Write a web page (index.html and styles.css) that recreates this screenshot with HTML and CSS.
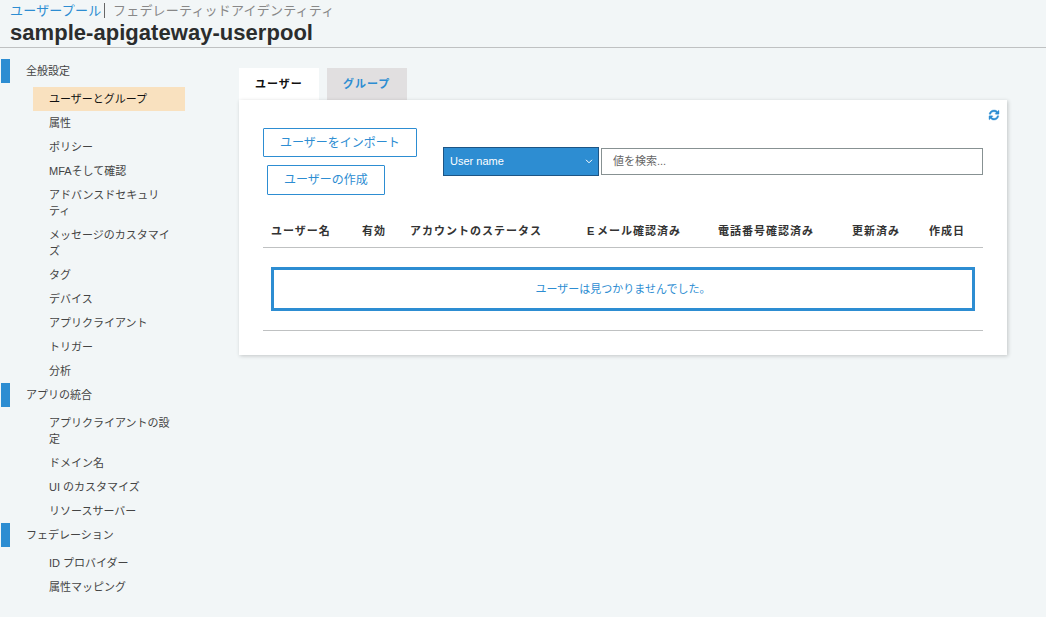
FILE: index.html
```html
<!DOCTYPE html>
<html lang="ja">
<head>
<meta charset="utf-8">
<title>sample-apigateway-userpool</title>
<link rel="stylesheet" href="styles.css">
</head>
<body>
<header class="header">
  <nav class="crumbs"><a class="crumb crumb-current">ユーザープール</a><a class="crumb">フェデレーティッドアイデンティティ</a></nav>
  <h1 class="title">sample-apigateway-userpool</h1>
</header>
<div class="layout">
  <aside class="sidebar">
    <h2 class="group">全般設定</h2>
    <ul class="menu">
      <li class="item item-active">ユーザーとグループ</li>
      <li class="item">属性</li>
      <li class="item">ポリシー</li>
      <li class="item">MFAそして確認</li>
      <li class="item">アドバンスドセキュリティ</li>
      <li class="item">メッセージのカスタマイズ</li>
      <li class="item">タグ</li>
      <li class="item">デバイス</li>
      <li class="item">アプリクライアント</li>
      <li class="item">トリガー</li>
      <li class="item">分析</li>
    </ul>
    <h2 class="group">アプリの統合</h2>
    <ul class="menu">
      <li class="item">アプリクライアントの設定</li>
      <li class="item">ドメイン名</li>
      <li class="item">UI のカスタマイズ</li>
      <li class="item">リソースサーバー</li>
    </ul>
    <h2 class="group">フェデレーション</h2>
    <ul class="menu">
      <li class="item">ID プロバイダー</li>
      <li class="item">属性マッピング</li>
    </ul>
  </aside>
  <main class="main">
    <div class="tabs">
      <div class="tab tab-active">ユーザー</div>
      <div class="tab">グループ</div>
    </div>
    <section class="panel">
      <svg class="refresh" viewBox="0 0 1536 1536"><path fill="currentColor" stroke="currentColor" stroke-width="60" d="M1511 928q0 5-1 7-64 268-268 434.500T764 1536q-146 0-282.500-55T238 1324l-129 129q-19 19-45 19t-45-19-19-45V960q0-26 19-45t45-19h448q26 0 45 19t19 45-19 45l-137 137q71 66 161 102t187 36q134 0 250-65t186-179q11-17 53-117 8-23 30-23h192q13 0 22.500 9.500t9.500 22.500zm25-800v448q0 26-19 45t-45 19h-448q-26 0-45-19t-19-45 19-45l138-138Q969 256 768 256q-134 0-250 65T332 500q-11 17-53 117-8 23-30 23H50q-13 0-22.500-9.500T18 608v-7q65-268 270-434.500T768 0q146 0 284 55.500T1297 212l130-129q19-19 45-19t45 19 19 45z"/></svg>
      <div class="toolbar">
        <div class="actions">
          <button class="btn">ユーザーをインポート</button>
          <button class="btn btn-create">ユーザーの作成</button>
        </div>
        <div class="search">
          <div class="select"><span>User name</span><svg class="chevron" viewBox="0 0 8 5"><path d="M1 .8 4 3.8 7 .8" fill="none" stroke="currentColor"/></svg></div>
          <input class="search-input" type="text" placeholder="値を検索...">
        </div>
      </div>
      <div class="table-head">
        <span>ユーザー名</span><span>有効</span><span>アカウントのステータス</span><span><span class="latin">E </span>メール確認済み</span><span>電話番号確認済み</span><span>更新済み</span><span>作成日</span>
      </div>
      <div class="table-body">
        <div class="empty">ユーザーは見つかりませんでした。</div>
      </div>
    </section>
  </main>
</div>
</body>
</html>
```
FILE: styles.css
```css
* { box-sizing: border-box; }
body {
  margin: 0;
  background: #f2f6f7;
  color: #444;
  font: 11px/16px "Liberation Sans", "Noto Sans CJK JP", sans-serif;
}
.header {
  height: 48px;
  padding: 3px 10px 0;
  border-bottom: 1px solid #bfc1c2;
}
.crumbs { display: flex; font-size: 13px; line-height: 15px; height: 15px; letter-spacing: .1px; }
.crumb { color: #888; padding-left: 8px; letter-spacing: .2px; }
.crumb-current {
  width: 95px;
  padding-left: 0;
  color: #2d8dd2;
  border-right: 1px solid #666;
}
.title { margin: 2px 0 0; font-size: 22px; line-height: 26px; letter-spacing: .04px; color: #2b2d2d; }
.layout { display: flex; }
.sidebar { width: 185px; padding: 11px 0 0 1px; }
.group {
  margin: 0 0 4px;
  padding: 4px 0 4px 16px;
  border-left: 9px solid #2d8dd2;
  font-size: 11px;
  font-weight: normal;
}
.menu { margin: 0 0 0 32px; padding: 0; list-style: none; line-break: strict; }
.item { padding: 4px 12px 4px 16px; }
.item-active { background: #f9e1bf; color: #111; }
.main { margin-left: 54px; padding-top: 20px; width: 768px; }
.tabs { display: flex; gap: 8px; }
.tab {
  width: 80px;
  height: 32px;
  background: #e1dfe0;
  color: #2d8dd2;
  font-weight: bold;
  letter-spacing: 1px;
  line-height: 32px;
  padding-left: 16px;
}
.tab-active { background: #fff; color: #111; }
.panel {
  position: relative;
  height: 255px;
  padding: 28px 24px 0;
  background: #fff;
  box-shadow: 1px 1px 4px rgba(0, 0, 0, .2);
}
.refresh { position: absolute; right: 8px; top: 10px; width: 10px; height: 10px; overflow: visible; color: #2d8dd2; }
.toolbar { display: flex; height: 67px; }
.actions { width: 180px; display: flex; flex-direction: column; align-items: flex-start; gap: 8px; }
.btn {
  width: 154px;
  height: 29px;
  padding: 0;
  border: 1px solid #2d8dd2;
  border-radius: 1px;
  background: #fff;
  color: #2d8dd2;
  font: 12px/26px "Liberation Sans", "Noto Sans CJK JP", sans-serif;
}
.btn-create { width: 118px; height: 30px; margin-left: 4px; }
.search { flex: 1; display: flex; align-items: center; gap: 2px; height: 67px; }
.select {
  display: flex;
  align-items: center;
  justify-content: space-between;
  width: 156px;
  height: 29px;
  padding: 0 5px 1px 6px;
  border: 1px solid #1d5585;
  background: #2d8dd2;
  color: #fff;
}
.chevron { width: 8px; height: 5px; }
.search-input {
  width: 382px;
  height: 27px;
  padding: 0 11px 1px;
  border: 1px solid #879192;
  font: inherit;
}
.search-input::placeholder { color: #666; }
.table-head {
  display: grid;
  grid-template-columns: 91px 48px 177px 131px 134px 77px 1fr;
  margin-top: 20px;
  padding: 8px 0 8px 8px;
  height: 33px;
  border-bottom: 1px solid #bfc1c2;
  color: #333;
  font-weight: bold;
  letter-spacing: 1px;
  white-space: nowrap;
}
.latin { letter-spacing: -.2px; }
.table-body { height: 83px; padding: 19px 8px; border-bottom: 1px solid #bfc1c2; }
.empty {
  height: 44px;
  border: 3px solid #2d8dd2;
  line-height: 38px;
  text-align: center;
  color: #2d8dd2;
}
```
